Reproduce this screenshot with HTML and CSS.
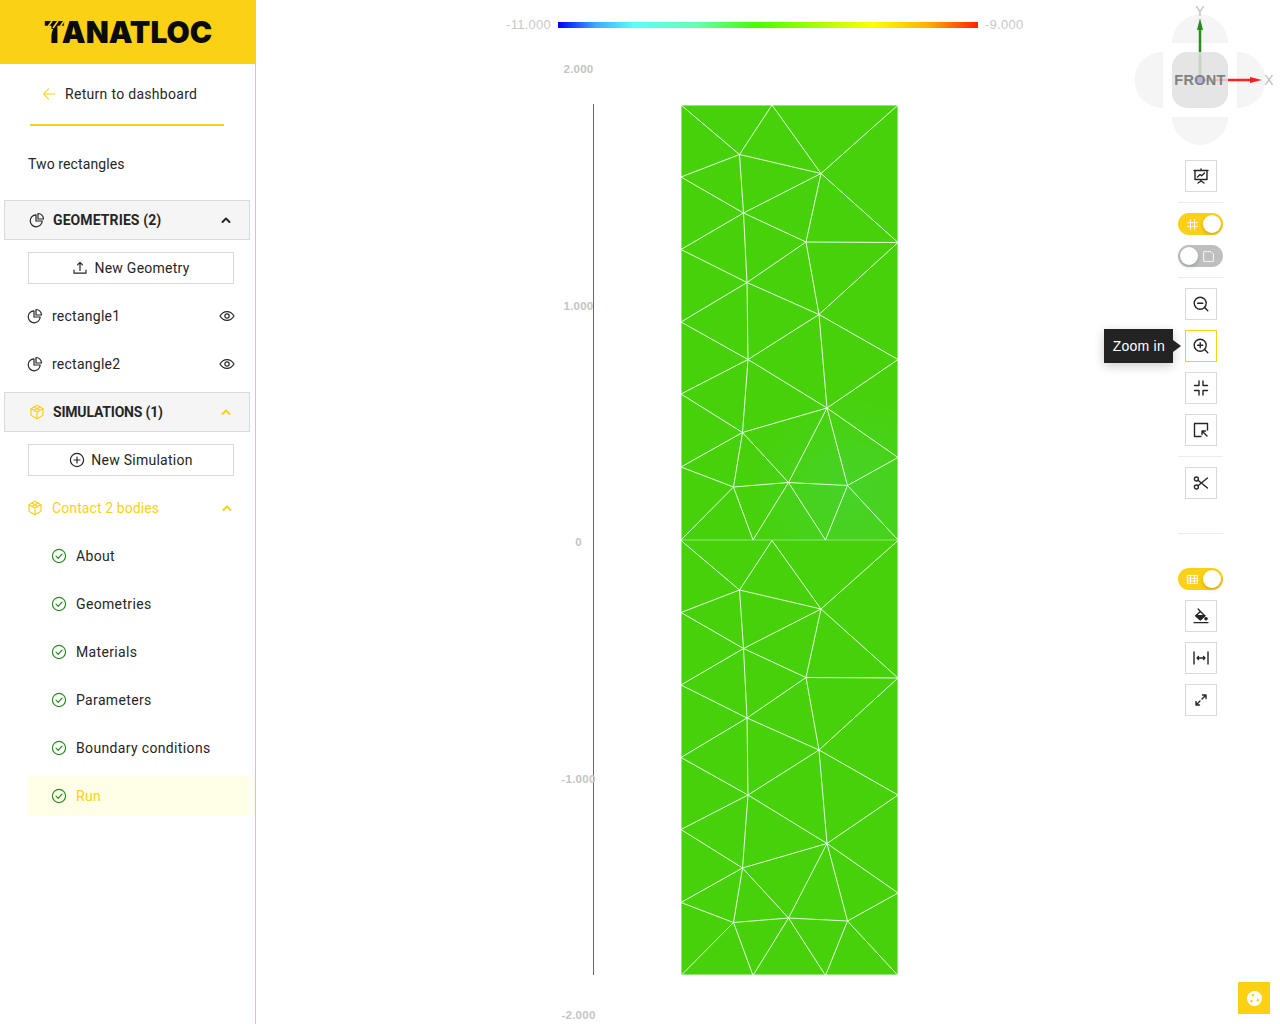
FILE: index.html
```html
<!DOCTYPE html>
<html lang="en">
<head>
    <meta charset="UTF-8">
    <title>Tanatloc</title>
    <link rel="stylesheet" href="styles.css">
</head>
<body>

<!-- Icon set -->
<svg class="icon-defs" aria-hidden="true">
    <symbol id="i-pie" viewBox="0 0 16 16"><path d="M7 2.8a6 6 0 1 0 6.2 6.2H7z"/><path d="M9 1.5a5.5 5.5 0 0 1 5.5 5.5H9z"/></symbol>
    <symbol id="i-cube" viewBox="0 0 16 16"><path d="M8 1.3 14 4.7v6.6L8 14.7 2 11.3V4.7z"/><path d="M2 4.7 8 8l6-3.3M8 8v6.7M5 3l6 3.4M11 3 5 6.4"/></symbol>
    <symbol id="i-check" viewBox="0 0 16 16"><circle cx="8" cy="8" r="6.6"/><path d="M5 8.2l2.2 2.2L11 6.2"/></symbol>
    <symbol id="i-eye" viewBox="0 0 16 16"><path d="M1 8s2.6-4.4 7-4.4S15 8 15 8s-2.6 4.4-7 4.4S1 8 1 8z"/><circle cx="8" cy="8" r="2.2"/></symbol>
    <symbol id="i-upload" viewBox="0 0 16 16"><path d="M8 10.5V2.5M5.6 4.8 8 2.4l2.4 2.4M2 10v3.2h12V10"/></symbol>
    <symbol id="i-plus" viewBox="0 0 16 16"><circle cx="8" cy="8" r="6.6"/><path d="M8 5v6M5 8h6"/></symbol>
    <symbol id="i-up" viewBox="0 0 16 16"><path d="M4.500 10 8 6.500 11.500 10"/></symbol>
    <symbol id="i-back" viewBox="0 0 16 16"><path d="M14.5 8H2M7.5 2.2 1.7 8l5.8 5.8"/></symbol>
    <symbol id="i-screen" viewBox="0 0 16 16"><path d="M1 2.5h14M2 2.5v9h12v-9M8 1v1.5M8 11.5V13M8 13l-3 2M8 13l3 2M4.5 9 7 6.5l1.7 1.3L11.5 5"/></symbol>
    <symbol id="i-zoom-out" viewBox="0 0 16 16"><circle cx="7.2" cy="7.2" r="6"/><path d="M4.6 7.2h5.2M11.6 11.6l3.2 3.2"/></symbol>
    <symbol id="i-zoom-in" viewBox="0 0 16 16"><circle cx="7.2" cy="7.2" r="6"/><path d="M4.6 7.2h5.2M7.2 4.6v5.2M11.6 11.6l3.2 3.2"/></symbol>
    <symbol id="i-compress" viewBox="0 0 16 16"><path d="M6 1v4.500H1.500M10 1v4.500h4.500M6 15v-4.500H1.500M10 15v-4.500h4.500"/></symbol>
    <symbol id="i-select" viewBox="0 0 16 16"><path d="M8 14.5H1.5v-13h13V8M9 9l5 5M9 9v3.6M9 9h3.6"/></symbol>
    <symbol id="i-scissor" viewBox="0 0 16 16"><circle cx="3.4" cy="4" r="2"/><circle cx="3.4" cy="12" r="2"/><path d="M5 5.2 14.5 13M5 10.8 14.5 3"/></symbol>
    <symbol id="i-bucket" viewBox="0 0 16 16"><path d="M1 14.600h14"/><path d="M7.300 3.400 11.800 7.800 7.300 11.800 2.800 7.800z"/><path class="solid" d="M2.800 7.800h9L7.300 11.800z"/><path d="M5.200 1l2.100 2.400"/><circle class="solid" cx="13" cy="10.800" r="1.100"/></symbol>
    <symbol id="i-width" viewBox="0 0 16 16"><path d="M1 2v12M15 2v12M4 8h8M5.500 6.500 4 8l1.500 1.500M10.500 6.500 12 8l-1.500 1.500"/></symbol>
    <symbol id="i-arrows" viewBox="0 0 16 16"><path d="M4 12 7 9M9 7l3-3M9.500 3h3.500v3.500M3 9.500V13h3.500"/></symbol>
    <symbol id="i-grid" viewBox="0 0 16 16"><path d="M5.500 3v10M10.500 3v10M2 6.500h12M2 9.800h12M2 3h12v10H2z"/></symbol>
    <symbol id="i-hash" viewBox="0 0 16 16"><path d="M5.500 2v12M10.500 2v12M2 5.800h12M2 10.200h12"/></symbol>
    <symbol id="i-page" viewBox="0 0 16 16"><path stroke-dasharray="1.500 1.200" d="M2 2h9l3 3v9H2z"/></symbol>
</svg>

<div class="app">

    <!-- Sidebar -->
    <aside class="sidebar">
        <div class="logo">
            <span class="logo-text">TANATLOC</span>
            <svg class="logo-stripes" viewBox="0 0 30 24" aria-hidden="true">
                <path d="M8 0 3 7M14 0 9 7M20 0 15 7"/>
                <path class="logo-cut" d="M0 8h9L4 24H0z"/>
            </svg>
        </div>

        <a class="back-link"><svg class="icon back-icon"><use href="#i-back"/></svg>Return to dashboard</a>

        <div class="project-title">Two rectangles</div>

        <nav class="menu">
            <div class="menu-head">
                <svg class="icon"><use href="#i-pie"/></svg>
                <span>GEOMETRIES (2)</span>
                <svg class="icon chevron"><use href="#i-up"/></svg>
            </div>
            <button class="add-button"><svg class="icon"><use href="#i-upload"/></svg>New Geometry</button>
            <div class="row">
                <svg class="icon"><use href="#i-pie"/></svg>
                <span>rectangle1</span>
                <svg class="icon eye"><use href="#i-eye"/></svg>
            </div>
            <div class="row">
                <svg class="icon"><use href="#i-pie"/></svg>
                <span>rectangle2</span>
                <svg class="icon eye"><use href="#i-eye"/></svg>
            </div>

            <div class="menu-head active">
                <svg class="icon"><use href="#i-cube"/></svg>
                <span>SIMULATIONS (1)</span>
                <svg class="icon chevron"><use href="#i-up"/></svg>
            </div>
            <button class="add-button"><svg class="icon"><use href="#i-plus"/></svg>New Simulation</button>
            <div class="row row-active">
                <svg class="icon"><use href="#i-cube"/></svg>
                <span>Contact 2 bodies</span>
                <svg class="icon chevron"><use href="#i-up"/></svg>
            </div>

            <div class="steps">
                <div class="step"><svg class="icon"><use href="#i-check"/></svg>About</div>
                <div class="step"><svg class="icon"><use href="#i-check"/></svg>Geometries</div>
                <div class="step"><svg class="icon"><use href="#i-check"/></svg>Materials</div>
                <div class="step"><svg class="icon"><use href="#i-check"/></svg>Parameters</div>
                <div class="step"><svg class="icon"><use href="#i-check"/></svg>Boundary conditions</div>
                <div class="step selected"><svg class="icon"><use href="#i-check"/></svg>Run</div>
            </div>
        </nav>
    </aside>

    <!-- 3D view -->
    <main class="view">
        <svg class="plot" viewBox="256 0 1024 1024">
            <defs>
                <linearGradient id="colormap">
                    <stop offset="0" stop-color="#0000ff"/>
                    <stop offset="0.09" stop-color="#3fa9ff"/>
                    <stop offset="0.18" stop-color="#55ffff"/>
                    <stop offset="0.33" stop-color="#66ffb0"/>
                    <stop offset="0.47" stop-color="#44ff00"/>
                    <stop offset="0.75" stop-color="#ffff00"/>
                    <stop offset="0.88" stop-color="#ffb000"/>
                    <stop offset="1" stop-color="#ff2200"/>
                </linearGradient>
                <radialGradient id="patch" gradientUnits="userSpaceOnUse" cx="852" cy="495" r="100">
                    <stop offset="0" stop-color="#47d32c" stop-opacity="0.9"/>
                    <stop offset="0.4" stop-color="#47d32c" stop-opacity="0.6"/>
                    <stop offset="1" stop-color="#47d32c" stop-opacity="0"/>
                </radialGradient>
                <path id="mesh" d="M681 105 739.500 154.500 772 105 821 173.500 898 105M739.500 154.500 821 173.500M739.500 154.500 681 177 743.500 213 739.500 154.500M743.500 213 821 173.500 806 242 743.500 213M821 173.500 898 242.500 806 242M743.500 213 681 249.500 747 282.500 743.500 213M747 282.500 806 242 819 314.500 747 282.500M819 314.500 898 242.500M747 282.500 681 322 748 359.500 747 282.500M748 359.500 819 314.500 827 408 748 359.500M819 314.500 898 359.500 827 408M748 359.500 681 394 742.500 432.500 748 359.500M742.500 432.500 827 408 788.500 482.500 742.500 432.500M827 408 898 457.500 847.500 485.500 827 408M847.500 485.500 788.500 482.500 733.500 487 742.500 432.500 681 467 733.500 487 681 540M733.500 487 753 540 788.500 482.500 825.500 540 847.500 485.500 898 540"/>
            </defs>

            <!-- colour scale -->
            <rect class="colorbar" x="558" y="22" width="420" height="6"/>
            <text class="scale-label" x="551" y="29" text-anchor="end">-11.000</text>
            <text class="scale-label" x="985" y="29">-9.000</text>

            <!-- axis -->
            <line class="axis" x1="593.500" y1="104" x2="593.500" y2="975"/>
            <text class="axis-label" x="578.500" y="73" text-anchor="middle">2.000</text>
            <text class="axis-label" x="578.500" y="310" text-anchor="middle">1.000</text>
            <text class="axis-label" x="578.500" y="546" text-anchor="middle">0</text>
            <text class="axis-label" x="578.500" y="783" text-anchor="middle">-1.000</text>
            <text class="axis-label" x="578.500" y="1019" text-anchor="middle">-2.000</text>

            <!-- mesh -->
            <rect class="body" x="681" y="105" width="217" height="870"/>
            <rect class="body-patch" x="740" y="390" width="158" height="150"/>
            <rect class="edge" x="681.500" y="105.500" width="216" height="869"/>
            <line class="edge edge-mid" x1="681" y1="540" x2="898" y2="540"/>
            <use class="wire" href="#mesh"/>
            <use class="wire" href="#mesh" transform="translate(0 435.500)"/>

            <!-- orientation cube -->
            <path class="cube-face" d="M1172 43v-.500a28 28 0 0 1 56 0v.500zM1163 52h-.500a28 28 0 0 0 0 56h.500zM1237 52h.500a28 28 0 0 1 0 56h-.500zM1172 117a28 28 0 0 0 56 0z"/>
            <line class="arrow-green" x1="1200" y1="80" x2="1200" y2="28"/>
            <path class="head-green" d="M1200 18 1203 30h-6z"/>
            <line class="arrow-red" x1="1200" y1="80" x2="1252" y2="80"/>
            <path class="head-red" d="M1262 80 1250 77v6z"/>
            <rect class="cube-front" x="1172" y="52" width="56" height="56" rx="15"/>
            <circle class="arrow-origin" cx="1200" cy="80" r="3"/>
            <text class="cube-text" x="1200" y="84.500" text-anchor="middle">FRONT</text>
            <text class="cube-axis" x="1200" y="16" text-anchor="middle">Y</text>
            <text class="cube-axis" x="1269" y="85" text-anchor="middle">X</text>
        </svg>

        <!-- Toolbar -->
        <div class="toolbar">
            <button class="tool"><svg class="icon"><use href="#i-screen"/></svg></button>
            <hr class="tool-sep">
            <div class="switch"><svg class="icon"><use href="#i-hash"/></svg><i class="knob"></i></div>
            <div class="switch off"><i class="knob"></i><svg class="icon"><use href="#i-page"/></svg></div>
            <hr class="tool-sep">
            <button class="tool"><svg class="icon"><use href="#i-zoom-out"/></svg></button>
            <button class="tool hover">
                <svg class="icon"><use href="#i-zoom-in"/></svg>
                <span class="tooltip">Zoom in</span>
            </button>
            <button class="tool"><svg class="icon"><use href="#i-compress"/></svg></button>
            <button class="tool"><svg class="icon"><use href="#i-select"/></svg></button>
            <hr class="tool-sep">
            <button class="tool"><svg class="icon"><use href="#i-scissor"/></svg></button>
            <hr class="tool-sep wide">
            <div class="switch"><svg class="icon"><use href="#i-grid"/></svg><i class="knob"></i></div>
            <button class="tool"><svg class="icon"><use href="#i-bucket"/></svg></button>
            <button class="tool"><svg class="icon"><use href="#i-width"/></svg></button>
            <button class="tool"><svg class="icon"><use href="#i-arrows"/></svg></button>
        </div>

        <!-- Cookie button -->
        <div class="cookie"><span class="cookie-dot"></span></div>
    </main>
</div>

</body>
</html>
```

FILE: styles.css
```css
html, body {
    margin: 0;
    height: 100%;
    overflow: hidden;
}
body {
    font-family: Roboto, Arial, sans-serif;
    font-size: 14px;
    letter-spacing: 0.25px;
    color: #262626;
    background: #fff;
}
.icon-defs {
    display: none;
}
.icon {
    width: 16px;
    height: 16px;
    flex: none;
    fill: none;
    stroke: currentColor;
    stroke-width: 1.2;
    stroke-linecap: round;
    stroke-linejoin: round;
}
.solid {
    fill: currentColor;
}
.app {
    display: flex;
    height: 1024px;
}

/* Sidebar */
.sidebar {
    width: 256px;
    flex: none;
    border-right: 1px solid #fad114;
    box-sizing: border-box;
}
.logo {
    position: relative;
    height: 64px;
    background: #fad114;
    display: flex;
    align-items: center;
    padding-left: 44px;
}
.logo-text {
    font-family: Inter, Arial, sans-serif;
    font-weight: 900;
    font-size: 30px;
    letter-spacing: 0;
    color: #0b0b0b;
}
.logo-stripes {
    position: absolute;
    left: 44px;
    top: 21px;
    width: 30px;
    height: 24px;
    fill: none;
    stroke: #fad114;
    stroke-width: 1.6;
}
.logo-cut {
    fill: #fad114;
    stroke: none;
}
.back-link {
    display: flex;
    align-items: center;
    gap: 9px;
    height: 60px;
    margin: 0 31px 0 30px;
    padding-left: 12px;
    border-bottom: 2px solid #fad114;
    letter-spacing: 0.3px;
}
.back-icon {
    width: 14px;
    height: 14px;
    color: #fad114;
}
.project-title {
    line-height: 22px;
    padding: 27px 28px 25px;
    letter-spacing: 0.1px;
}
.menu-head {
    display: flex;
    align-items: center;
    gap: 8px;
    height: 40px;
    box-sizing: border-box;
    margin: 0 5px 0 4px;
    padding: 0 15px 0 24px;
    background: #f5f5f5;
    border: 1px solid #d9d9d9;
    font-weight: 700;
    letter-spacing: 0.1px;
}
.menu-head.active {
    margin-top: 4px;
}
.menu-head.active .icon {
    color: #fad114;
}
.menu-head.active span {
    letter-spacing: -0.2px;
}
.chevron {
    margin-left: auto;
    stroke-width: 2;
}
.add-button {
    display: flex;
    align-items: center;
    justify-content: center;
    gap: 6px;
    width: 206px;
    height: 32px;
    margin: 12px 0 8px 28px;
    padding: 0;
    background: #fff;
    border: 1px solid #d9d9d9;
    font: inherit;
    letter-spacing: inherit;
    color: inherit;
}
.row {
    display: flex;
    align-items: center;
    gap: 9px;
    height: 48px;
    padding: 0 20px 0 27px;
}
.eye {
    margin-left: auto;
}
.row-active {
    color: #fad114;
    letter-spacing: 0.1px;
}
.steps {
    display: flex;
    flex-direction: column;
    gap: 8px;
    padding: 4px 0;
}
.step {
    display: flex;
    align-items: center;
    gap: 9px;
    height: 40px;
    margin: 0 6px 0 28px;
    padding-left: 23px;
    letter-spacing: 0.35px;
}
.step .icon {
    color: #2a8a2a;
}
.step.selected {
    background: #fffee6;
    color: #fad114;
}

/* 3D view */
.view {
    position: relative;
    flex: 1;
}
.plot {
    display: block;
    width: 1024px;
    height: 1024px;
}
.colorbar {
    fill: url(#colormap);
}
.scale-label {
    font: 13px "Liberation Sans", Arial, sans-serif;
    fill: #c8c8c8;
}
.axis {
    stroke: #666;
    stroke-width: 1;
}
.axis-label {
    font: bold 11.5px "Liberation Sans", Arial, sans-serif;
    fill: #c4c4c4;
}
.body {
    fill: #47d10b;
}
.body-patch {
    fill: url(#patch);
}
.edge {
    fill: none;
    stroke: #8ce878;
    stroke-width: 1;
}
.wire {
    fill: none;
    stroke: #f4fff0;
    stroke-width: 1;
    opacity: 0.9;
}
.cube-face {
    fill: #f5f5f5;
}
.cube-front {
    fill: #e0e0e0;
    opacity: 0.85;
}
.arrow-green {
    stroke: #2a8a1e;
    stroke-width: 2.5;
}
.head-green {
    fill: #2a8a1e;
}
.arrow-red {
    stroke: #ff1f1f;
    stroke-width: 2.5;
}
.head-red {
    fill: #ff1f1f;
}
.arrow-origin {
    fill: #b4b4ea;
}
.cube-text {
    font: bold 14.5px "Liberation Sans", Arial, sans-serif;
    letter-spacing: 0.3px;
    fill: #777;
    opacity: 0.9;
}
.cube-axis {
    font: 14px "Liberation Sans", Arial, sans-serif;
    fill: #bdbdbd;
}

/* Toolbar */
.toolbar {
    position: absolute;
    top: 160px;
    left: 922px;
    width: 45px;
    display: flex;
    flex-direction: column;
    align-items: center;
    gap: 10px;
}
.tool {
    position: relative;
    display: flex;
    align-items: center;
    justify-content: center;
    width: 32px;
    height: 32px;
    flex: none;
    margin-left: 1px;
    padding: 0;
    background: #fff;
    border: 1px solid #d9d9d9;
    color: #262626;
}
.tool .icon {
    stroke-width: 1.4;
}
.tool.hover {
    border-color: #fad114;
}
.tool-sep {
    width: 100%;
    height: 1px;
    margin: 0;
    border: none;
    background: #ececec;
}
.tool-sep.wide {
    margin: 24px 0;
}
.switch {
    display: flex;
    align-items: center;
    justify-content: space-between;
    width: 45px;
    height: 22px;
    flex: none;
    box-sizing: border-box;
    padding: 0 2px 0 8px;
    border-radius: 11px;
    background: #fad114;
    color: #fff;
}
.switch.off {
    padding: 0 8px 0 2px;
    background: #bfbfbf;
}
.switch .icon {
    width: 13px;
    height: 13px;
}
.knob {
    width: 18px;
    height: 18px;
    border-radius: 50%;
    background: #fff;
    box-shadow: 0 2px 4px rgba(0, 35, 11, 0.2);
}
.tooltip {
    position: absolute;
    right: 43px;
    top: -2px;
    padding: 0 8px 0 9px;
    height: 34px;
    line-height: 34px;
    background: #232323;
    color: #fff;
    font-size: 14px;
    letter-spacing: 0.25px;
    white-space: nowrap;
    box-shadow: 0 3px 10px rgba(0, 0, 0, 0.2);
}
.tooltip::after {
    content: "";
    position: absolute;
    left: 100%;
    top: 11px;
    border: 6px solid transparent;
    border-left: 8px solid #232323;
    border-right: none;
}

/* Cookie button */
.cookie {
    position: absolute;
    left: 982px;
    top: 982px;
    width: 32px;
    height: 32px;
    display: flex;
    align-items: center;
    justify-content: center;
    background: #fad114;
}
.cookie-dot {
    width: 15px;
    height: 15px;
    border-radius: 50%;
    background: radial-gradient(circle at 40% 28%, #fad114 1px, transparent 1.5px),
                radial-gradient(circle at 72% 62%, #fad114 1px, transparent 1.5px),
                radial-gradient(circle at 30% 68%, #fad114 1px, transparent 1.5px),
                #fff;
}
```
